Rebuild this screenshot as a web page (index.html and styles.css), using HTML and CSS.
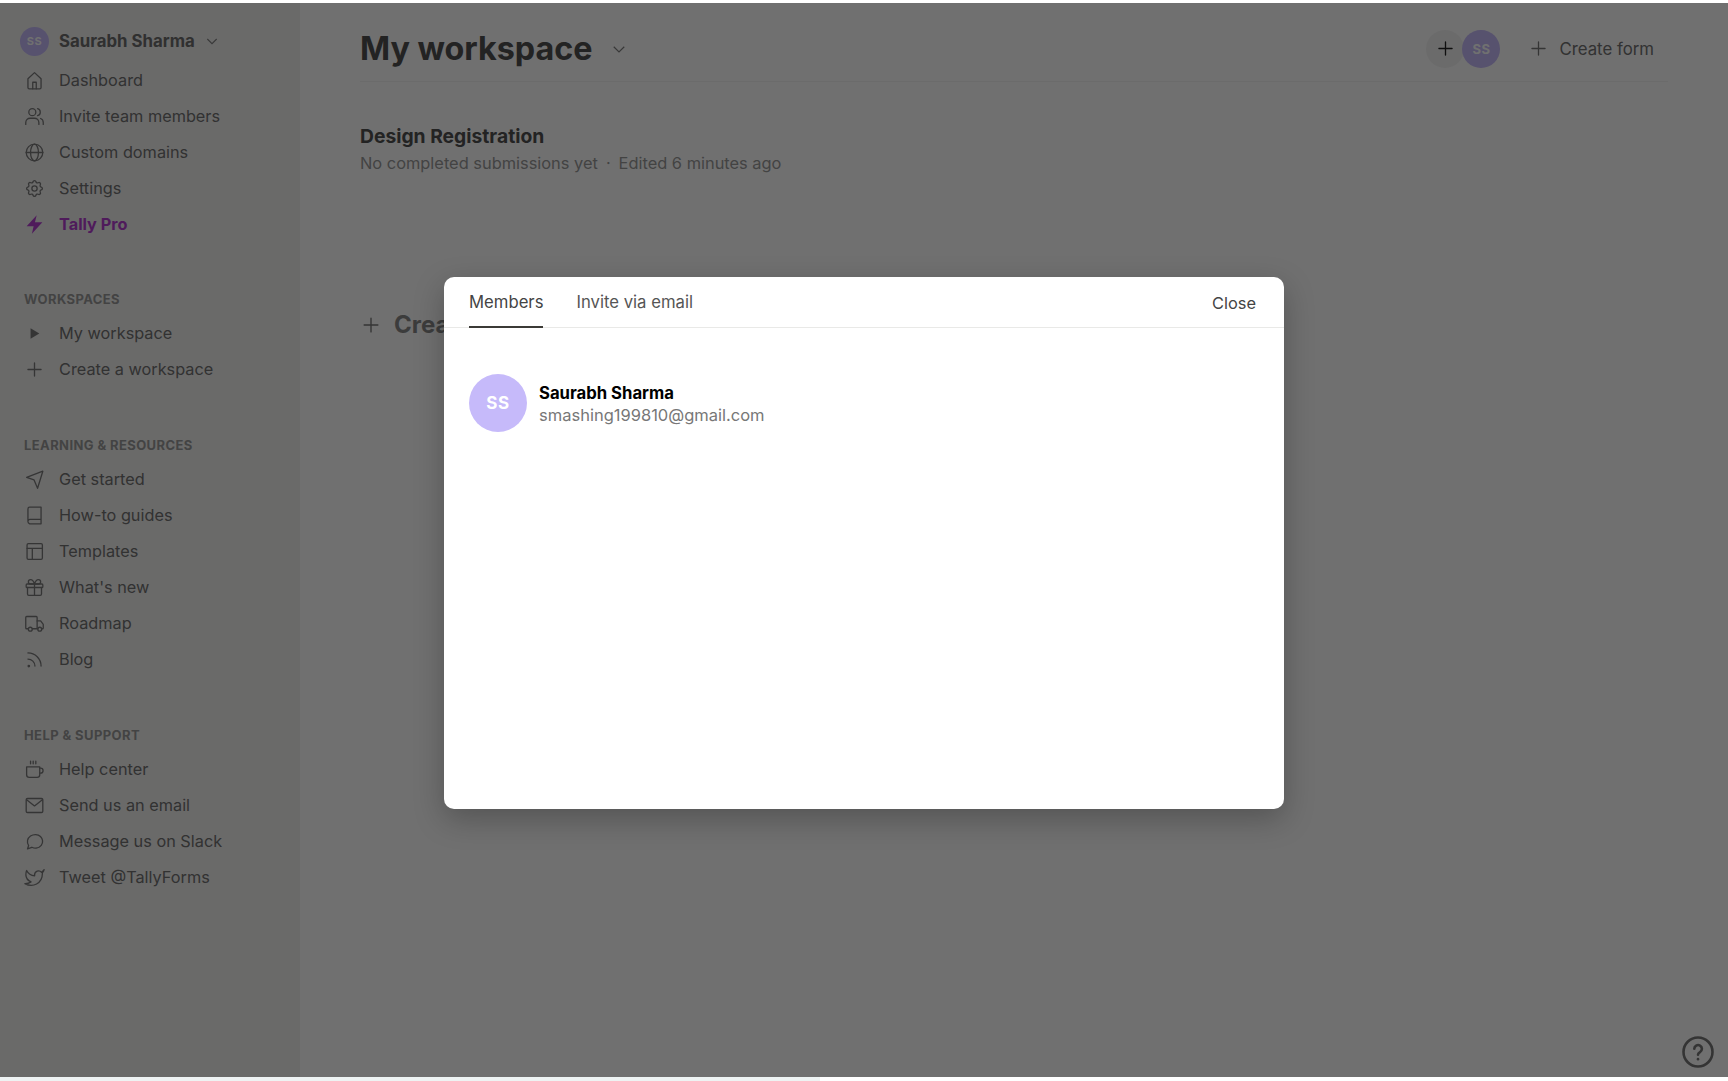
FILE: index.html
```html
<!DOCTYPE html>
<html lang="en">
<head>
    <meta charset="UTF-8">
    <meta name="viewport" content="width=device-width, initial-scale=1.0">
    <title>Tally - My workspace</title>
    <link rel="stylesheet" href="styles.css">
</head>
<body>
    <div class="app">
        <aside class="sidebar">
            <div class="account">
                <span class="avatar avatar-small">SS</span>
                <span class="account-name">Saurabh Sharma</span>
                <svg class="chevron" viewBox="0 0 24 24"><path d="M5 9l7 7 7-7"/></svg>
            </div>
            <nav class="nav-group">
                <a class="nav-item" href="#"><svg class="icon" viewBox="0 0 24 24"><path d="M4.500 10 12 3l7.500 7v10a1.500 1.500 0 0 1-1.500 1.500H6A1.500 1.500 0 0 1 4.500 20z"/><path d="M10 21.500V14h4v7.500"/></svg>Dashboard</a>
                <a class="nav-item" href="#"><svg class="icon" viewBox="0 0 24 24"><circle cx="9.500" cy="7" r="4"/><path d="M2 21v-2a5 5 0 0 1 5-5h5a5 5 0 0 1 5 5v2"/><path d="M15.500 3.100a4 4 0 0 1 0 7.800"/><path d="M19 14.300a5 5 0 0 1 3 4.700v2"/></svg>Invite team members</a>
                <a class="nav-item" href="#"><svg class="icon" viewBox="0 0 24 24"><circle cx="12" cy="12" r="9.500"/><path d="M2.500 12h19"/><ellipse cx="12" cy="12" rx="4.500" ry="9.500"/></svg>Custom domains</a>
                <a class="nav-item" href="#"><svg class="icon" viewBox="0 0 24 24"><path d="M10.325 4.317c.426-1.756 2.924-1.756 3.350 0a1.724 1.724 0 0 0 2.573 1.066c1.543-.94 3.310.826 2.370 2.370a1.724 1.724 0 0 0 1.065 2.572c1.756.426 1.756 2.924 0 3.350a1.724 1.724 0 0 0-1.066 2.573c.94 1.543-.826 3.310-2.370 2.370a1.724 1.724 0 0 0-2.572 1.065c-.426 1.756-2.924 1.756-3.350 0a1.724 1.724 0 0 0-2.573-1.066c-1.543.94-3.310-.826-2.370-2.370a1.724 1.724 0 0 0-1.065-2.572c-1.756-.426-1.756-2.924 0-3.350a1.724 1.724 0 0 0 1.066-2.573c-.94-1.543.826-3.310 2.370-2.370 1 .608 2.296.07 2.572-1.065z"/><circle cx="12" cy="12" r="3"/></svg>Settings</a>
                <a class="nav-item nav-pro" href="#"><svg class="icon icon-fill" viewBox="0 0 24 24"><path d="M14.500 1.500 3 14h8l-2 8.500L21 9.500h-8.500z"/></svg>Tally Pro</a>
            </nav>

            <h4 class="nav-title nav-title-first">WORKSPACES</h4>
            <nav class="nav-group">
                <a class="nav-item" href="#"><svg class="icon icon-fill" viewBox="0 0 24 24"><path d="M7.500 6v12l10-6z"/></svg>My workspace</a>
                <a class="nav-item" href="#"><svg class="icon" viewBox="0 0 24 24"><path d="M12 4.500v15M4.500 12h15"/></svg>Create a workspace</a>
            </nav>

            <h4 class="nav-title">LEARNING &amp; RESOURCES</h4>
            <nav class="nav-group">
                <a class="nav-item" href="#"><svg class="icon" viewBox="0 0 24 24"><path d="M21.500 2.500 15.500 22l-4-9.500L3 9.500z"/></svg>Get started</a>
                <a class="nav-item" href="#"><svg class="icon" viewBox="0 0 24 24"><path d="M4.500 18.500V4.500a2 2 0 0 1 2-2h13v19h-13a3 3 0 0 1-2-3a2.500 2.500 0 0 1 2-2h13"/></svg>How-to guides</a>
                <a class="nav-item" href="#"><svg class="icon" viewBox="0 0 24 24"><rect x="3.500" y="3" width="17.500" height="18" rx="1.500"/><path d="M3.500 8.500H21M9.500 8.500V21"/></svg>Templates</a>
                <a class="nav-item" href="#"><svg class="icon" viewBox="0 0 24 24"><rect x="2.500" y="8" width="19" height="4" rx="1"/><path d="M4 12v7.500a1.500 1.500 0 0 0 1.500 1.500h13a1.500 1.500 0 0 0 1.500-1.500V12M12 8v13"/><path d="M12 8H7.500a2.500 2.500 0 0 1 0-5C10.500 3 12 8 12 8zM12 8h4.500a2.500 2.500 0 0 0 0-5C13.500 3 12 8 12 8z"/></svg>What's new</a>
                <a class="nav-item" href="#"><svg class="icon" viewBox="0 0 24 24"><path d="M5 18H3a1 1 0 0 1-1-1V5a1 1 0 0 1 1-1h11a1 1 0 0 1 1 1v13H9.500"/><path d="M15 9h4l3 4v4a1 1 0 0 1-1 1h-1"/><path d="M15.500 18H16"/><circle cx="7.200" cy="18.500" r="2.200"/><circle cx="18" cy="18.500" r="2.200"/></svg>Roadmap</a>
                <a class="nav-item" href="#"><svg class="icon" viewBox="0 0 24 24"><circle cx="5.500" cy="19.500" r=".8"/><path d="M4.500 11.500a8 8 0 0 1 8 8M4.500 4.500a15 15 0 0 1 15 15"/></svg>Blog</a>
            </nav>

            <h4 class="nav-title">HELP &amp; SUPPORT</h4>
            <nav class="nav-group">
                <a class="nav-item" href="#"><svg class="icon" viewBox="0 0 24 24"><path d="M3 9h15v9a3 3 0 0 1-3 3H6a3 3 0 0 1-3-3z"/><path d="M18 10.500h1a2.800 2.800 0 0 1 0 5.600h-1"/><path d="M7.500 2.500v3M10.500 2.500v3M13.500 2.500v3"/></svg>Help center</a>
                <a class="nav-item" href="#"><svg class="icon" viewBox="0 0 24 24"><rect x="2.500" y="4" width="19" height="16" rx="1.500"/><path d="m3 5.500 9 7 9-7"/></svg>Send us an email</a>
                <a class="nav-item" href="#"><svg class="icon" viewBox="0 0 24 24"><path d="M4 20.500l1.300-3.900C2.800 13 3.800 8.300 7.400 5.800c3.600-2.500 8.500-2.300 11.400.4 2.900 2.700 3.300 7.100.9 10.200-2.400 3.100-6.900 4-10.700 2.200z"/></svg>Message us on Slack</a>
                <a class="nav-item" href="#"><svg class="icon" viewBox="0 0 24 24"><path d="M23 3a10.900 10.900 0 0 1-3 3 4.480 4.480 0 0 0-7.860 3v1A10.660 10.660 0 0 1 3 4s-4 9 5 13a11.640 11.640 0 0 1-7 2c9 5 20 0 20-11.500a4.500 4.500 0 0 0-.08-.83A7.720 7.720 0 0 0 23 3z"/></svg>Tweet @TallyForms</a>
            </nav>
        </aside>

        <main class="main">
            <header class="main-header">
                <h1 class="page-title">My workspace</h1>
                <svg class="chevron chevron-title" viewBox="0 0 24 24"><path d="M5 9l7 7 7-7"/></svg>
                <div class="header-actions">
                    <div class="members">
                        <span class="add-member"><svg class="icon icon-dark" viewBox="0 0 24 24"><path d="M12 4.500v15M4.500 12h15"/></svg></span>
                        <span class="avatar avatar-header">SS</span>
                    </div>
                    <a class="create-form" href="#"><svg class="icon" viewBox="0 0 24 24"><path d="M12 4.500v15M4.500 12h15"/></svg>Create form</a>
                </div>
            </header>

            <section class="form-row">
                <h2 class="form-title">Design Registration</h2>
                <p class="form-meta">No completed submissions yet<span class="dot">·</span>Edited 6 minutes ago</p>
            </section>

            <a class="create-new" href="#"><svg class="icon icon-plus" viewBox="0 0 24 24"><path d="M12 4.500v15M4.500 12h15"/></svg>Create a new form</a>

            <svg class="help-icon" viewBox="0 0 32 32"><circle cx="16" cy="16" r="14.500"/><path d="M12.300 12.800a3.800 3.800 0 1 1 5.700 3.300c-1.200.7-2 1.300-2 2.700"/><path d="M16 23v.2"/></svg>
        </main>

        <div class="overlay">
            <div class="modal">
                <div class="modal-tabs">
                    <a class="tab tab-active" href="#">Members</a>
                    <a class="tab" href="#">Invite via email</a>
                    <a class="modal-close" href="#">Close</a>
                </div>
                <div class="modal-body">
                    <div class="member">
                        <span class="avatar avatar-large">SS</span>
                        <div class="member-info">
                            <div class="member-name">Saurabh Sharma</div>
                            <div class="member-email">smashing199810@gmail.com</div>
                        </div>
                    </div>
                </div>
            </div>
        </div>
    </div>
    <div class="bottom-strip"></div>
</body>
</html>
```

FILE: styles.css
```css
* {
    box-sizing: border-box;
}
html, body {
    height: 100%;
}
body {
    margin: 0;
    padding-top: 3px;
    background-color: #fff;
    font-family: 'Inter', 'Open Sans', sans-serif;
    overflow: hidden;
}
a {
    color: inherit;
    text-decoration: none;
}
svg {
    flex: none;
}
.app {
    position: relative;
    display: flex;
    height: 1074px;
    overflow: hidden;
    background-color: #fff;
}
.bottom-strip {
    height: 4px;
    background: linear-gradient(to right, #eef3f3 820px, #fff 820px);
}

/* sidebar */
.sidebar {
    width: 300px;
    flex: none;
    padding: 22px 0 0 24px;
    background-color: #f1f1f0;
    color: #727272;
}
.account {
    display: flex;
    align-items: center;
    height: 32px;
    margin-left: -4px;
    margin-bottom: 5px;
}
.account-name {
    margin-left: 10px;
    font-size: 16.8px;
    font-weight: 700;
    color: #6e6e6e;
}
.chevron {
    width: 16px;
    height: 16px;
    margin-left: 9px;
    fill: none;
    stroke: #808080;
    stroke-width: 1.6;
}
.nav-group {
    display: flex;
    flex-direction: column;
}
.nav-item {
    display: flex;
    align-items: center;
    gap: 14px;
    height: 36px;
    font-size: 16.3px;
    white-space: nowrap;
}
.icon {
    width: 21px;
    height: 21px;
    fill: none;
    stroke: #7a7a7a;
    stroke-width: 1.5;
    stroke-linecap: round;
    stroke-linejoin: round;
}
.icon-fill {
    fill: #7a7a7a;
    stroke: none;
}
.nav-pro {
    font-weight: 700;
    color: #b43fd0;
}
.nav-pro .icon-fill {
    fill: #b43fd0;
}
.nav-title {
    margin: 42px 0 0;
    height: 32px;
    line-height: 32px;
    font-size: 13px;
    font-weight: 700;
    letter-spacing: 0.4px;
    color: #9a9a9a;
}
.nav-title-first {
    margin-top: 41px;
}

/* main */
.main {
    position: relative;
    flex: 1;
    padding: 0 60px;
    color: #666;
}
.main-header {
    display: flex;
    align-items: center;
    height: 79px;
    padding-top: 13px;
    border-bottom: 1px solid #f4f4f4;
}
.page-title {
    margin: 0;
    font-size: 32.3px;
    font-weight: 700;
    color: #505050;
}
.chevron-title {
    width: 18px;
    height: 18px;
    margin-left: 18px;
}
.header-actions {
    display: flex;
    align-items: center;
    margin-left: auto;
}
.members {
    display: flex;
}
.add-member {
    display: flex;
    align-items: center;
    justify-content: center;
    width: 38px;
    height: 38px;
    margin-right: -2px;
    border-radius: 50%;
    background-color: #f4f4f4;
}
.icon-dark {
    stroke: #222;
}
.avatar {
    display: flex;
    align-items: center;
    justify-content: center;
    flex: none;
    border-radius: 50%;
    background-color: #c6bafa;
    color: #fff;
    font-weight: 700;
    letter-spacing: 0.5px;
}
.avatar-small {
    width: 29px;
    height: 29px;
    font-size: 11px;
}
.avatar-header {
    width: 38px;
    height: 38px;
    font-size: 13px;
}
.avatar-large {
    width: 58px;
    height: 58px;
    font-size: 17px;
}
.create-form {
    display: flex;
    align-items: center;
    gap: 10px;
    margin-left: 28px;
    margin-right: 14px;
    font-size: 16.8px;
    color: #727272;
}
.form-row {
    margin-top: 41px;
}
.form-title {
    margin: 0;
    font-size: 19.3px;
    line-height: 26px;
    font-weight: 700;
    color: #505050;
}
.form-meta {
    margin: 2px 0 0;
    font-size: 16.4px;
    line-height: 24px;
    color: #999;
}
.dot {
    margin: 0 8px;
}
.create-new {
    display: flex;
    align-items: center;
    gap: 12px;
    margin-top: 135px;
    font-size: 24px;
    font-weight: 700;
    color: #8a8a8a;
}
.icon-plus {
    width: 22px;
    height: 22px;
}
.help-icon {
    position: absolute;
    right: 14px;
    bottom: 9px;
    width: 32px;
    height: 32px;
    fill: none;
    stroke: #777;
    stroke-width: 2.6;
    stroke-linecap: round;
}

/* modal */
.overlay {
    position: absolute;
    inset: 0;
    display: flex;
    justify-content: center;
    padding-top: 274px;
    background-color: rgba(0, 0, 0, 0.56);
}
.modal {
    width: 840px;
    height: 532px;
    border-radius: 10px;
    background-color: #fff;
    box-shadow: 0 10px 30px rgba(0, 0, 0, 0.25);
}
.modal-tabs {
    display: flex;
    align-items: stretch;
    height: 51px;
    padding: 3px 28px 0 25px;
    border-bottom: 1px solid #e9e9e7;
}
.tab {
    display: flex;
    align-items: center;
    margin-right: 33px;
    margin-bottom: -1px;
    padding-bottom: 2px;
    font-size: 16.7px;
    color: #555;
    border-bottom: 2px solid transparent;
}
.tab-active {
    color: #444;
    border-bottom-color: #3b3a36;
}
.modal-close {
    display: flex;
    align-items: center;
    margin-left: auto;
    padding-bottom: 1px;
    font-size: 16.4px;
    color: #444;
}
.modal-body {
    padding: 46px 25px;
}
.member {
    display: flex;
    align-items: center;
    gap: 12px;
}
.member-info {
    padding-top: 2px;
}
.member-name {
    font-size: 16.7px;
    line-height: 22px;
    font-weight: 700;
    color: #000;
}
.member-email {
    font-size: 16.5px;
    line-height: 22px;
    color: #777;
}
```
